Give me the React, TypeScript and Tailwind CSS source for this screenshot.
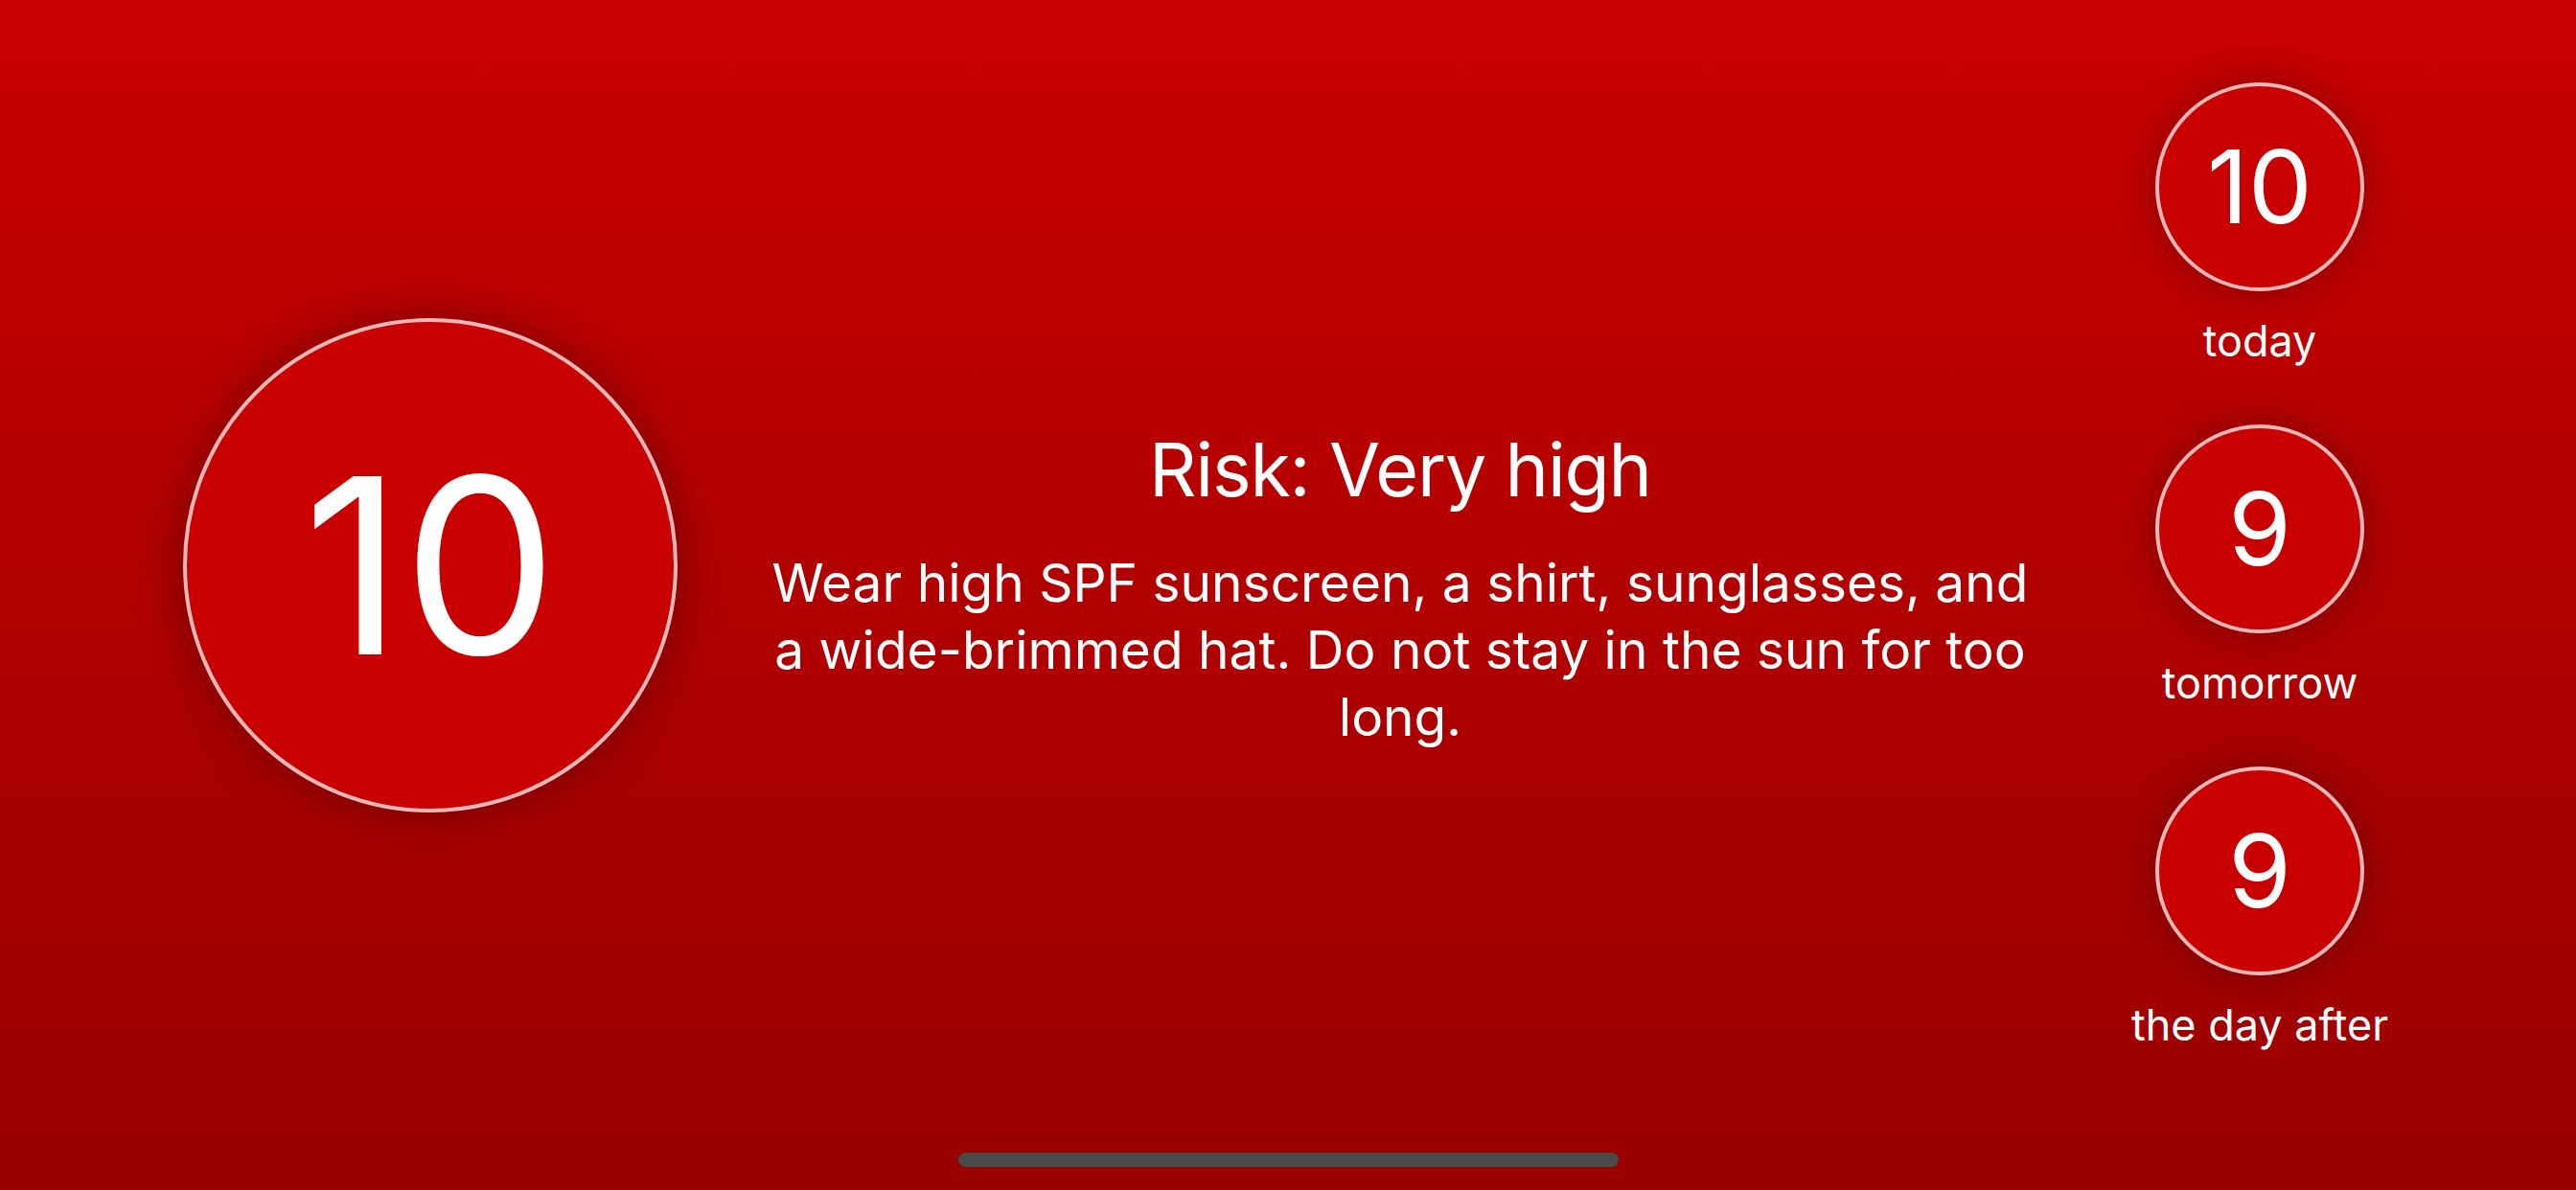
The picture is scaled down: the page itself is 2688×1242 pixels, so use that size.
import React from 'react';

const forecast = [
	{ value: 10, label: 'today' },
	{ value: 9, label: 'tomorrow' },
	{ value: 9, label: 'the day after' },
];

const font = { fontFamily: 'Inter, "Noto Sans", sans-serif' };

export default function App() {
	return (
		<div
			className="w-[2688px] h-[1242px] flex flex-col bg-gradient-to-b from-[#c90000] to-[#990000] text-white overflow-hidden"
			style={font}
		>
			{/* Main content */}
			<div className="h-[1180px] flex items-center">
				{/* Current index */}
				<div className="pl-[191px]">
					<div className="w-[516px] h-[516px] rounded-full bg-[#c80000] border-[4px] border-[#f0b8b8] shadow-[0_0_50px_rgba(0,0,0,0.35)] flex items-center justify-center">
						<span className="text-[256px] leading-none">10</span>
					</div>
				</div>

				{/* Advice */}
				<div className="flex-1 pl-[77px] flex justify-center mt-[44px]">
					<div className="max-w-[1325px] flex flex-col items-center text-center gap-[35px]">
						<h1 className="text-[77px] leading-[96px] font-normal tracking-[-0.015em]">Risk: Very high</h1>
						<p className="text-[55px] leading-[70px]">
							Wear high SPF sunscreen, a shirt, sunglasses, and a wide-brimmed hat. Do not stay in the sun for too long.
						</p>
					</div>
				</div>

				{/* Forecast */}
				<div className="w-[440px] mr-[110px] flex flex-col items-center gap-[62px]">
					{forecast.map((day) => (
						<div key={day.label} className="flex flex-col items-center gap-[27px]">
							<div className="w-[218px] h-[218px] rounded-full bg-[#c80000] border-[4px] border-[#f0b8b8] shadow-[0_0_40px_rgba(0,0,0,0.3)] flex items-center justify-center">
								<span className="text-[106px] leading-none">{day.value}</span>
							</div>
							<span className="text-[45px] leading-[50px]">{day.label}</span>
						</div>
					))}
				</div>
			</div>

			{/* Home indicator */}
			<div className="flex-1 flex justify-center pt-[23px]">
				<div className="w-[689px] h-[15px] rounded-full bg-[#4a4a4a]" />
			</div>
		</div>
	);
}
